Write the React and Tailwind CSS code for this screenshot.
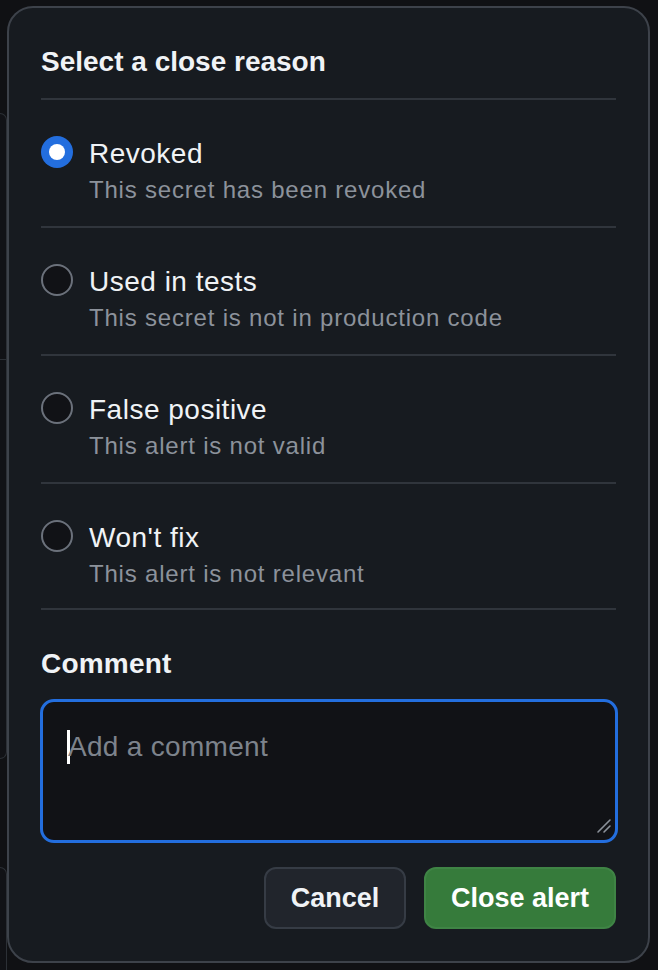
import React from "react";

const reasons = [
  { label: "Revoked", desc: "This secret has been revoked", checked: true },
  { label: "Used in tests", desc: "This secret is not in production code" },
  { label: "False positive", desc: "This alert is not valid" },
  { label: "Won't fix", desc: "This alert is not relevant" },
];

function Radio({ checked }) {
  if (checked) {
    return (
      <span className="mt-[1px] flex h-[32px] w-[32px] shrink-0 items-center justify-center rounded-full bg-[#236ede]">
        <span className="h-[16px] w-[16px] rounded-full bg-white" />
      </span>
    );
  }
  return (
    <span className="mt-[1px] h-[32px] w-[32px] shrink-0 rounded-full border-2 border-[#6b717b] bg-[#111216]" />
  );
}

export default function App() {
  return (
    <div
      className="relative h-[970px] w-[658px] overflow-hidden bg-[#101114]"
      style={{ fontFamily: '"Liberation Sans", Arial, sans-serif' }}
    >
      {/* underlying page */}
      <div className="flex flex-col pt-[113px]">
        <div className="flex h-[646px] w-[7px] flex-col rounded-r-[14px] border-r border-t border-b border-[#2c3036] bg-[#111216]">
          <div className="h-[246px] border-b border-[#2c3036]" />
        </div>
        <div className="mt-[108px] h-[200px] w-[7px] rounded-tr-[14px] border-r border-t border-[#2c3036] bg-[#111216]" />
      </div>

      {/* dialog */}
      <div className="absolute left-[7px] top-[6px] flex w-[643px] flex-col rounded-[26px] border-2 border-[#3d424a] bg-[#171b20] px-8 pt-[34px] pb-[32px] text-[#f0f3f6]">
        <h2 className="mb-[16px] h-[40px] text-[28px] font-bold leading-[40px]">Select a close reason</h2>
        <div className="border-t-2 border-[#30353c]">
          {reasons.map((r, i) => (
            <div
              key={r.label}
              className={
                "flex items-start gap-[16px] border-b-2 border-[#30353c] pt-[35px] " +
                (i === reasons.length - 1 ? "pb-[17px]" : "pb-[19px]")
              }
            >
              <Radio checked={r.checked} />
              <div className="flex flex-col">
                <span className="text-[28px] leading-[38px] tracking-[0.5px] text-[#f0f3f6]">{r.label}</span>
                <span className="text-[24px] leading-[34px] tracking-[0.8px] text-[#8c929b]">{r.desc}</span>
              </div>
            </div>
          ))}
        </div>

        <div className="mt-[34px] h-[40px] text-[28px] font-bold leading-[40px] tracking-[0.2px]">Comment</div>
        <div className="relative mt-[15px] -ml-[1px] h-[144px] w-[578px] rounded-[14px] border-[3px] border-[#236ede] bg-[#111216] pl-[24px] pt-[25px]">
          <div className="flex items-center text-[28px] leading-[40px] tracking-[0.3px] text-[#7d838c]">
            <span className="mr-[-2px] h-[34px] w-[3px] bg-white" />
            <span>Add a comment</span>
          </div>
          <svg
            className="absolute bottom-[6px] right-[3px]"
            width="16"
            height="16"
            viewBox="0 0 16 16"
          >
            <path d="M2 14 L14 2 M8 14 L14 8" stroke="#8c929b" strokeWidth="1.6" strokeLinecap="round" />
          </svg>
        </div>

        <div className="mt-[24px] flex justify-end gap-[18px]">
          <button className="h-[62px] w-[142px] rounded-[12px] border-2 border-[#363c45] bg-[#21252c] text-[27px] font-bold text-[#f0f3f6]">
            Cancel
          </button>
          <button className="h-[62px] w-[192px] rounded-[12px] border-2 border-[#3f8445] bg-[#367b3b] text-[27px] font-bold text-white">
            Close alert
          </button>
        </div>
      </div>
    </div>
  );
}
